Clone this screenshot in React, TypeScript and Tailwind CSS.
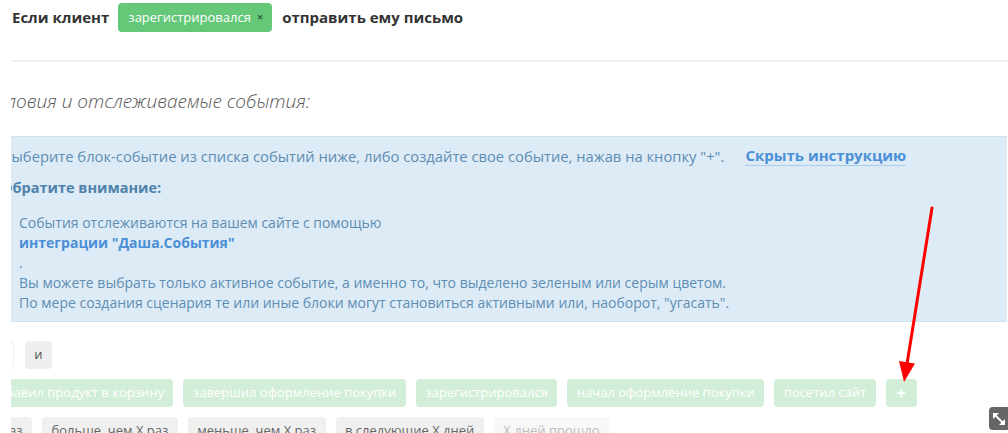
import React from "react";

const greenChips = [
  "добавил продукт в корзину",
  "завершил оформление покупки",
  "зарегистрировался",
  "начал оформление покупки",
  "посетил сайт",
];

const grayChips = ["больше, чем X раз", "меньше, чем X раз", "в следующие X дней"];

function ResizeIcon() {
  return (
    <svg width="14" height="14" viewBox="0 0 14 14" fill="none">
      <line x1="3" y1="3" x2="11" y2="11" stroke="white" strokeWidth="1.8" />
      <polygon points="1,1 7,1 1,7" fill="white" />
      <polygon points="13,13 7,13 13,7" fill="white" />
    </svg>
  );
}

export default function App() {
  return (
    <div className="relative w-[1008px] h-[433px] overflow-hidden bg-white font-['Open_Sans',sans-serif]">
      {/* Rule header */}
      <div className="flex items-center h-[31px] mt-[2px] pl-[12px] text-[15px] font-bold text-[#333]">
        <span>Если клиент</span>
        <span className="ml-[9px] flex items-center h-[29px] pl-[10px] pr-[9px] rounded-[4px] bg-[#64c878] text-white text-[13px] font-normal">
          зарегистрировался
          <span className="ml-[6px] text-[11px] font-bold text-[#2f5f3c]">×</span>
        </span>
        <span className="ml-[10px]">отправить ему письмо</span>
      </div>

      {/* Conditions panel, scrolled horizontally */}
      <div className="mt-[27px] ml-[11px] mr-[1px] overflow-hidden">
        <div className="h-[2px] bg-[#eef1f2]" />
        <div className="-ml-[30px]">
          <div className="h-[74px] flex items-center pt-[4px] pl-[6px] text-[19px] italic font-light text-[#555] whitespace-nowrap">
            Условия и отслеживаемые события:
          </div>

          <div className="w-[1100px] bg-[#ddebf6] border-y border-[#cfe2f0] px-[22px] pt-[9px] pb-[8px] text-[14px] text-[#5d8db3] leading-[20px] whitespace-nowrap">
            <div className="flex items-center">
              <span className="-ml-[1px] text-[14.75px]">Выберите блок-событие из списка событий ниже, либо создайте свое событие, нажав на кнопку "+".</span>
              <span className="ml-[21px] text-[15px] font-bold text-[#4b90d6] border-b border-[#aecbe6] leading-[19px]">
                Скрыть инструкцию
              </span>
            </div>
            <div className="mt-[12px] -ml-[2px] text-[14.5px] font-bold text-[#4f82aa]">Обратите внимание:</div>
            <div className="mt-[15px] pl-[16px]">
              <div>События отслеживаются на вашем сайте с помощью</div>
              <div className="font-bold text-[#4b8fd6]">интеграции "Даша.События"</div>
              <div>.</div>
              <div>Вы можете выбрать только активное событие, а именно то, что выделено зеленым или серым цветом.</div>
              <div>По мере создания сценария те или иные блоки могут становиться активными или, наоборот, "угасать".</div>
            </div>
          </div>

          {/* Logic operator */}
          <div className="mt-[19px] -ml-[7px] flex gap-[11px] text-[13px] text-[#555]">
            <span className="h-[28px] w-[40px] flex items-center justify-center rounded-[4px] bg-white border border-[#eee]">или</span>
            <span className="h-[28px] w-[27px] flex items-center justify-center rounded-[4px] bg-[#efefef]">и</span>
          </div>

          {/* Events */}
          <div className="mt-[10px] flex gap-[10px] text-[13px] text-white whitespace-nowrap">
            {greenChips.map((c) => (
              <span key={c} className="h-[28px] px-[9.5px] flex items-center rounded-[4px] bg-[#d2eed8]">
                {c}
              </span>
            ))}
            <span className="h-[28px] w-[31px] flex items-center justify-center rounded-[4px] bg-[#d2eed8] text-[16px] font-bold">+</span>
          </div>

          {/* Conditions */}
          <div className="mt-[10px] -ml-[43px] flex gap-[10px] text-[13px] text-[#666] whitespace-nowrap">
            <span className="h-[28px] px-[9.5px] flex items-center rounded-[4px] bg-[#f0f0f0]">ровно X раз</span>
            {grayChips.map((c) => (
              <span key={c} className="h-[28px] px-[9.5px] flex items-center rounded-[4px] bg-[#f0f0f0]">
                {c}
              </span>
            ))}
            <span className="h-[28px] px-[9.5px] flex items-center rounded-[4px] bg-[#f8f8f8] text-[#bbb]">X дней прошло</span>
          </div>
        </div>
      </div>

      {/* Red pointer arrow */}
      <svg className="absolute left-0 top-0 pointer-events-none" width="1008" height="433">
        <line x1="932" y1="208" x2="907" y2="364" stroke="#ff0000" strokeWidth="3" strokeLinecap="round" />
        <polygon points="899,361 915,363.5 904,382" fill="#ff0000" />
      </svg>

      {/* Fullscreen toggle */}
      <button className="absolute left-[989px] top-[407px] w-[24px] h-[23px] rounded-[4px] bg-[#666] flex items-center pl-[3px]">
        <ResizeIcon />
      </button>
    </div>
  );
}
